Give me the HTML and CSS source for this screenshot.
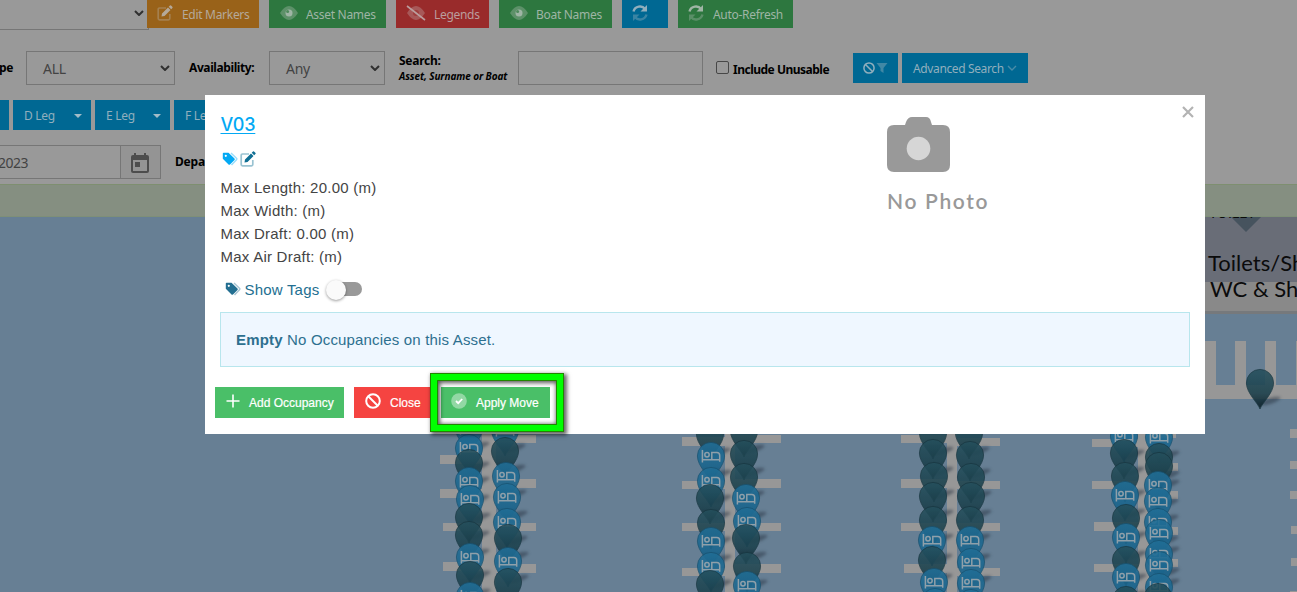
FILE: index.html
```html
<!DOCTYPE html>
<html lang="en">
<head>
<meta charset="utf-8">
<title>Marina Map</title>
<link rel="stylesheet" href="styles.css">
</head>
<body>
<svg class="defs" width="0" height="0" aria-hidden="true">
  <defs>
    <linearGradient id="darkFill" x1="0" y1="0" x2="0" y2="1"><stop offset="0" stop-color="#25505d"/><stop offset=".6" stop-color="#1b404c"/><stop offset="1" stop-color="#0b1c24"/></linearGradient>
    <linearGradient id="blueFill" x1="0" y1="0" x2="0" y2="1"><stop offset="0" stop-color="#216e96"/><stop offset=".6" stop-color="#1b658d"/><stop offset="1" stop-color="#0e3d58"/></linearGradient>
    <filter id="soft" x="-50%" y="-50%" width="200%" height="200%"><feGaussianBlur stdDeviation="1.5"/></filter>
    <g id="shade"><ellipse cx="10" cy="18" rx="11" ry="3" transform="rotate(-18 10 18)" fill="#27333f" opacity=".5" filter="url(#soft)"/></g>
    <path id="drop" d="M0 26C-2 20-13.6 10-13.6 0A13.6 13.6 0 0 1 13.6 0C13.6 10 2 20 0 26Z"/>
    <g id="d"><use href="#shade"/><use href="#drop" fill="url(#darkFill)" stroke="#17353f" stroke-width=".8" opacity=".88"/></g>
    <g id="b"><use href="#shade"/><use href="#drop" fill="url(#blueFill)" stroke="#17516f" stroke-width=".8" opacity=".9"/><path d="M-8.600-6V6.500M-8.600 3.700H8.700M8.700 5.800V-.6Q8.700-3.500 5.800-3.500H.8V3.700" fill="none" stroke="#8fa0aa" stroke-width="1.500"/><circle cx="-4" cy="-1.200" r="2.200" fill="none" stroke="#8fa0aa" stroke-width="1.500"/></g>
    <symbol id="eye" viewBox="0 0 18 14"><path d="M0 7Q9-7 18 7Q9 21 0 7Z" fill="currentColor" opacity=".42"/><circle cx="9" cy="7" r="3.500" fill="currentColor"/><circle cx="7.600" cy="5.600" r="1.500" fill="#4f8a5c"/></symbol>
    <symbol id="sync" viewBox="0 0 16 16"><path d="M1.500 6.500C3 1 10 0 13 4" fill="none" stroke="currentColor" stroke-width="2.400"/><path d="M15 0V6.500H8.500Z" fill="currentColor"/><g opacity=".4"><path d="M14.500 9.500C13 15 6 16 3 12" fill="none" stroke="currentColor" stroke-width="2.400"/><path d="M1 16V9.500H7.500Z" fill="currentColor"/></g></symbol>
    <symbol id="edit" viewBox="0 0 16 16"><path d="M9 3H2.500Q1.200 3 1.200 4.300V13.500Q1.200 14.800 2.500 14.800H11.500Q12.800 14.800 12.800 13.500V9" fill="none" stroke="currentColor" stroke-width="1.700" opacity=".42"/><path d="M4.500 11.500L5 8.500L11 2.500L13.500 5L7.500 11ZM11.700 1.800L13 .6Q13.600 0 14.300.7L15.300 1.700Q16 2.400 15.400 3L14.200 4.300Z" fill="currentColor"/></symbol>
    <symbol id="tags" viewBox="0 0 16 14"><path d="M9 1L14.500 6.300Q15.200 7 14.500 7.700L9.500 13" fill="none" stroke="currentColor" stroke-width="1.400" opacity=".4"/><path d="M.8 1.500Q.8.800 1.500.8H6.500L12.500 6.600Q13.200 7.300 12.500 8L8 12.500Q7.200 13.200 6.500 12.500L.8 6.800ZM3.800 2.700A1.100 1.100 0 1 0 3.800 4.900A1.100 1.100 0 1 0 3.800 2.700Z" fill="currentColor" fill-rule="evenodd"/></symbol>
    <symbol id="ban" viewBox="0 0 16 16"><path d="M3 3L13 13" stroke="currentColor" stroke-width="2"/><circle cx="8" cy="8" r="6.800" fill="none" stroke="currentColor" stroke-width="2"/></symbol>
    <symbol id="chev" viewBox="0 0 10 6"><path d="M1 1L5 5L9 1" fill="none" stroke="currentColor" stroke-width="2"/></symbol>
  </defs>
</svg>

<div class="page">
  <header class="tools">
    <div class="row actions">
      <div class="select top"><svg class="arrow"><use href="#chev"/></svg></div>
      <div class="btn orange w112"><svg class="i16"><use href="#edit"/></svg><span>Edit Markers</span></div>
      <div class="btn green w117"><svg class="eye"><use href="#eye"/></svg><span>Asset Names</span></div>
      <div class="btn red w93"><svg class="slash" viewBox="0 0 20 16"><path d="M1 8Q10-6 19 8Q10 22 1 8Z" fill="currentColor" opacity=".4"/><circle cx="10" cy="8" r="3" fill="#992b2b" opacity=".6"/><path d="M1 1L19 15" stroke="currentColor" stroke-width="1.600"/></svg><span>Legends</span></div>
      <div class="btn green w113"><svg class="eye"><use href="#eye"/></svg><span>Boat Names</span></div>
      <div class="btn blue w46"><svg class="i16"><use href="#sync"/></svg></div>
      <div class="btn green w115"><svg class="i16"><use href="#sync"/></svg><span>Auto-Refresh</span></div>
    </div>
    <div class="row filters">
      <b class="type">pe</b>
      <div class="select all"><span>ALL</span><svg class="arrow"><use href="#chev"/></svg></div>
      <b class="avail">Availability:</b>
      <div class="select any"><span>Any</span><svg class="arrow"><use href="#chev"/></svg></div>
      <div class="search"><b>Search:</b><i>Asset, Surname or Boat</i></div>
      <div class="field"></div>
      <div class="check"></div>
      <b class="unusable">Include Unusable</b>
      <div class="btn blue clear"><svg class="i12"><use href="#ban"/></svg><svg class="i12" viewBox="0 0 12 12"><path d="M.5 1H11.500L7.500 6V11L4.500 9V6Z" fill="currentColor" opacity=".45"/></svg></div>
      <div class="btn blue adv"><span>Advanced Search</span><svg class="small" viewBox="0 0 10 6"><path d="M1 1L5 5L9 1" fill="none" stroke="currentColor" stroke-width="1.400" opacity=".5"/></svg></div>
    </div>
    <div class="row legs">
      <div class="btn blue stub"></div>
      <div class="btn blue leg w78"><span>D Leg</span><em class="caret"></em></div>
      <div class="btn blue leg w75"><span>E Leg</span><em class="caret"></em></div>
      <div class="btn blue leg w78"><span>F Leg</span></div>
    </div>
    <div class="row dates">
      <div class="date"><span>2023</span></div>
      <div class="cal"><svg viewBox="0 0 18 20"><path d="M3 0H5V2H13V0H15V2H16Q18 2 18 4V18Q18 20 16 20H2Q0 20 0 18V4Q0 2 2 2H3ZM2 7V18H16V7ZM4 9H9V14H4Z" fill="#4d4d4d" fill-rule="evenodd"/></svg></div>
      <b class="depart">Departure:</b>
    </div>
  </header>
  <div class="notice"></div>
  <svg class="map" viewBox="0 217 1297 375" width="1297" height="375">
    <rect y="217" width="1297" height="375" fill="#677f94"/>
    <rect x="1200" y="217" width="97" height="65" fill="#696d77"/>
    <rect x="1200" y="282" width="97" height="29" fill="#898989"/>
    <rect x="1200" y="311" width="97" height="3" fill="#76797c"/>
    <path d="M1231 217H1261L1246 232Z" fill="#46535e"/>
    <text class="place tiny" x="1209" y="218">TOILET</text>
    <text class="place" x="1208" y="270.500">Toilets/Sh</text>
    <text class="place" x="1210" y="297">WC &amp; Sh</text>
    <path fill="#979797" d="M1200 341h16v44h-16zM1235 341h11v44h-11zM1265 341h11v44h-11zM1296 341h1v44h-1zM1200 385h97v14h-97z
    M482 430h14v162h-14zM440 455h42v9h-42zM440 489h42v9h-42zM443 523h39v8h-39zM443 562h39v9h-39zM496 435h40v8h-40zM496 479h40v9h-40zM496 523h40v8h-40zM496 564h40v9h-40z
    M725 430h10v162h-10zM682 437h43v9h-43zM682 481h43v8h-43zM682 523h43v8h-43zM682 568h43v8h-43zM735 435h46v8h-46zM735 479h46v9h-46zM735 523h46v8h-46zM735 564h46v9h-46z
    M947 430h10v162h-10zM901 435h46v8h-46zM901 479h46v9h-46zM901 523h46v8h-46zM904 564h43v9h-43zM957 438h43v8h-43zM957 481h43v8h-43zM957 523h43v8h-43zM957 568h43v8h-43z
    M1138 430h11v162h-11zM1092 439h46v8h-46zM1092 481h46v8h-46zM1094 522h44v9h-44zM1094 564h44v8h-44zM1149 430h27v8h-27zM1149 463h29v8h-29zM1149 491h29v8h-29zM1149 527h29v8h-29zM1149 559h29v8h-29z
    M1290 429h7v9h-7zM1290 461h7v8h-7zM1290 491h7v8h-7zM1291 526h6v8h-6zM1291 558h6v8h-6zM1290 591h7v1h-7z"/>
    <use href="#d" x="1260" y="383"/>
    <g>
      <use href="#b" x="469" y="428"/><use href="#b" x="469" y="448"/><use href="#d" x="469" y="463"/><use href="#b" x="469" y="481"/><use href="#b" x="470" y="499"/><use href="#d" x="469" y="517"/><use href="#d" x="469" y="535"/><use href="#b" x="470" y="557"/><use href="#d" x="470" y="575"/><use href="#b" x="470" y="596"/>
      <use href="#b" x="505" y="430"/><use href="#d" x="505" y="451"/><use href="#b" x="506" y="476"/><use href="#b" x="507" y="497"/><use href="#b" x="507" y="522"/><use href="#d" x="508" y="538"/><use href="#b" x="508" y="561"/><use href="#d" x="508" y="582"/>
    </g>
    <g>
      <use href="#d" x="710" y="434"/><use href="#b" x="711" y="456"/><use href="#b" x="711" y="481"/><use href="#d" x="710" y="498"/><use href="#d" x="711" y="523"/><use href="#b" x="711" y="541"/><use href="#b" x="711" y="566"/><use href="#d" x="710" y="584"/>
      <use href="#d" x="744" y="431"/><use href="#d" x="744" y="454"/><use href="#d" x="744" y="477"/><use href="#b" x="746" y="498"/><use href="#b" x="747" y="521"/><use href="#d" x="746" y="538"/><use href="#d" x="747" y="566"/><use href="#b" x="747" y="585"/>
    </g>
    <g>
      <use href="#d" x="933" y="433"/><use href="#d" x="933" y="453"/><use href="#d" x="934" y="476"/><use href="#d" x="933" y="496"/><use href="#d" x="933" y="520"/><use href="#b" x="932" y="540"/><use href="#d" x="932" y="560"/><use href="#b" x="934" y="582"/><use href="#b" x="935" y="602"/>
      <use href="#d" x="969" y="433"/><use href="#d" x="970" y="455"/><use href="#d" x="971" y="477"/><use href="#d" x="971" y="496"/><use href="#d" x="970" y="520"/><use href="#b" x="970" y="540"/><use href="#b" x="971" y="562"/><use href="#b" x="971" y="583"/><use href="#b" x="971" y="603"/>
    </g>
    <g>
      <use href="#b" x="1124" y="436"/><use href="#d" x="1124" y="453"/><use href="#d" x="1125" y="476"/><use href="#b" x="1125" y="495"/><use href="#d" x="1126" y="518"/><use href="#b" x="1126" y="537"/><use href="#d" x="1126" y="560"/><use href="#b" x="1126" y="577"/><use href="#d" x="1126" y="600"/>
      <use href="#b" x="1159" y="437"/><use href="#d" x="1159" y="457"/><use href="#d" x="1159" y="466"/><use href="#b" x="1158" y="485"/><use href="#b" x="1158" y="501"/><use href="#b" x="1158" y="522"/><use href="#b" x="1159" y="533"/><use href="#b" x="1159" y="554"/><use href="#b" x="1159" y="565"/><use href="#b" x="1159" y="587"/><use href="#d" x="1158" y="597"/>
    </g>
  </svg>

  <section class="modal">
    <div class="upper">
      <div class="details">
        <a class="name">V03</a>
        <div class="icons"><svg class="tag cyan"><use href="#tags"/></svg><svg class="i16 teal"><use href="#edit"/></svg></div>
        <p>Max Length: 20.00 (m)</p>
        <p>Max Width: (m)</p>
        <p>Max Draft: 0.00 (m)</p>
        <p>Max Air Draft: (m)</p>
        <div class="show"><svg class="tag"><use href="#tags"/></svg><span>Show Tags</span><div class="switch"><em></em></div></div>
      </div>
      <div class="photo">
        <svg viewBox="0 0 63 55" width="63" height="55"><path d="M7 8H18L19 5Q21 0 25 0H39Q43 0 44 5L45 8H56Q63 8 63 15V48Q63 55 56 55H7Q0 55 0 48V15Q0 8 7 8Z" fill="#999"/><circle cx="31.500" cy="31.500" r="11.800" fill="#d6d6d6"/></svg>
        <span>No Photo</span>
      </div>
      <svg class="close" viewBox="0 0 12 12"><path d="M1 1L11 11M11 1L1 11" stroke="#b3b3b3" stroke-width="2.200"/></svg>
    </div>
    <div class="alert"><b>Empty</b> No Occupancies on this Asset.</div>
    <div class="buttons">
      <div class="mbtn g add"><svg class="i15" viewBox="0 0 14 14"><path d="M7 .5V13.500M.5 7H13.500" stroke="currentColor" stroke-width="1.600"/></svg><span>Add Occupancy</span></div>
      <div class="mbtn r cls"><svg class="i16"><use href="#ban"/></svg><span>Close</span></div>
      <div class="mbtn g apply"><svg class="i16" viewBox="0 0 16 16"><circle cx="8" cy="8" r="7.800" fill="#fff" opacity=".4"/><path d="M5 8L7.200 10.200L11.200 6" fill="none" stroke="#fff" stroke-width="1.800"/></svg><span>Apply Move</span></div>
    </div>
  </section>
  <div class="highlight"></div>
</div>
</body>
</html>
```
FILE: styles.css
```css
* { box-sizing: border-box; }
body { margin: 0; background: #999; font-family: "Noto Sans", sans-serif; font-size: 12px; color: #000; overflow: hidden; }
svg { display: block; flex: none; }
.defs { position: absolute; }
.page { position: relative; width: 1297px; height: 592px; overflow: hidden; }
.tools { height: 184px; }
.row { display: flex; white-space: nowrap; }
.row > * { flex: none; }
.actions { height: 51px; gap: 10px; }
.btn { height: 28px; display: flex; align-items: center; color: #a3b3b0; padding-left: 11px; font-size: 12px; letter-spacing: -.3px; }
.orange { background: #996219; color: #b5a999; margin-left: -12px; }
.green { background: #2d773f; color: #9fb5a5; }
.red { background: #992b2b; color: #bb9d9d; }
.blue { background: #006893; color: #91afbd; }
.w112 { width: 112px; }
.w117 { width: 117px; }
.w93 { width: 93px; }
.w113 { width: 113px; }
.w46 { width: 46px; }
.w115 { width: 115px; }
.w78 { width: 78px; }
.w75 { width: 75px; }
.i16 { width: 16px; height: 16px; }
.actions svg { margin-top: -3px; margin-right: 8px; }
.actions .btn .i16 { margin-left: -1px; margin-right: 9px; }
.actions .arrow { margin: 0; }
.actions .eye { width: 18px; height: 14px; margin-right: 8px; }
.actions .slash { width: 20px; height: 16px; margin-left: -1px; }
.select { border: 1px solid #767676; display: flex; align-items: center; justify-content: space-between; height: 34px; color: #434343; font-size: 14px; padding: 0 4px 0 16px; letter-spacing: -.3px; }
.arrow { width: 10px; height: 6px; color: #303030; }
.actions .top { width: 149px; height: 30px; border-top: 0; border-left: 0; padding-bottom: 3px; justify-content: flex-end; }
.filters { height: 49px; }
.filters b { font-size: 12px; letter-spacing: -.25px; line-height: 34px; }
.filters .type { width: 26px; text-indent: -1px; }
.all { width: 149px; }
.filters .avail { width: 94px; padding-left: 14px; letter-spacing: -.4px; }
.any { width: 116px; }
.search { width: 133px; padding: 1px 0 0 14px; display: flex; flex-direction: column; }
.filters .search b { line-height: 18px; }
.search i { font-size: 10px; font-weight: 700; line-height: 13px; letter-spacing: -.1px; }
.field { width: 185px; height: 34px; border: 1px solid #767676; }
.check { width: 13px; height: 13px; border: 1px solid #474747; border-radius: 2px; margin: 10px 4px 0 13px; }
.filters .unusable { width: 120px; line-height: 37px; letter-spacing: -.5px; }
.clear { width: 45px; height: 30px; margin: 2px 4px 0 0; padding-left: 10px; gap: 1px; }
.i12 { width: 12px; height: 12px; }
.adv { width: 126px; height: 30px; margin-top: 2px; gap: 1px; letter-spacing: -.37px; }
.adv span { width: 93px; }
.small { width: 10px; height: 6px; }
.legs { height: 45px; gap: 4px; }
.legs .btn { height: 30px; padding-top: 1px; }
.legs .stub { width: 9px; padding: 0; }
.leg { justify-content: space-between; padding-right: 9px; }
.caret { border: 4px solid transparent; border-top-color: #a2bcc8; border-bottom: 0; }
.dates { height: 39px; }
.date { width: 121px; height: 34px; border: 1px solid #767676; border-left: 0; color: #434343; font-size: 14px; line-height: 34px; letter-spacing: -.5px; }
.date span { margin-left: -2px; }
.cal { width: 40px; height: 34px; border: 1px solid #767676; border-left: 0; display: flex; justify-content: center; padding: 7px 1px 0 0; background: #949494; }
.cal svg { width: 18px; height: 20px; }
.depart { padding-left: 14px; line-height: 33px; letter-spacing: -.2px; }
.notice { height: 33px; background: #858f81; border-top: 1px solid #7e8f70; border-bottom: 1px solid #7e8f78; }
.place { font: 22px Lato, sans-serif; fill: #0b0b0b; }
.tiny { font-size: 14px; }
.modal { position: absolute; left: 205px; top: 95px; width: 1000px; height: 339px; background: #fff; font-family: "Liberation Sans", Arial, sans-serif; color: #444; }
.upper { display: flex; height: 217px; }
.details { width: 682px; padding: 19px 0 0 15.5px; }
.name { display: inline-block; color: #03a9f4; font: 500 18px/22px Inter, sans-serif; text-decoration: underline; text-underline-offset: 2px; letter-spacing: -.2px; }
.icons { display: flex; gap: 2px; height: 26px; margin: 15px 0 5px 1px; }
.tag { width: 16px; height: 14px; }
.cyan { color: #03a9f4; margin-top: 1px; }
.teal { color: #0f6f94; }
.details p { margin: 0; font-size: 15px; line-height: 23px; height: 23px; letter-spacing: .24px; }
.details .icons + p { margin-top: -6px; }
.show { display: flex; align-items: center; height: 24px; margin: 9px 0 0 4px; color: #236f91; font-size: 15px; gap: 4px; letter-spacing: .2px; }
.switch { width: 34px; height: 14px; border-radius: 7px; background: #999; margin-left: 5px; display: flex; align-items: center; }
.switch em { width: 20px; height: 20px; border-radius: 50%; background: #fafafa; margin-left: -2px; margin-top: 1px; flex: none; box-shadow: 0 1px 3px rgba(0,0,0,.4); }
.photo { width: 292px; padding-top: 22px; }
.photo span { display: block; font: 600 21px/26px Lato, sans-serif; color: #999; margin-top: 16px; letter-spacing: 1.65px; }
.close { width: 12px; height: 12px; margin-top: 11px; margin-left: 3px; }
.alert { margin: 0 15px; height: 55px; border: 1px solid #b8e6ed; background: #eff7ff; color: #2d708f; font-size: 15px; line-height: 53px; padding-left: 15px; letter-spacing: .17px; }
.buttons { display: flex; gap: 10px; margin: 20px 0 0 10px; }
.mbtn { height: 31px; display: flex; align-items: center; color: #fff; font-size: 12px; padding-left: 11px; white-space: nowrap; }
.mbtn svg { margin-top: -3px; }
.mbtn span { margin-left: 9px; -webkit-text-stroke: .2px #fff; }
.g { background: #4abf68; }
.r { background: #f54441; }
.i15 { width: 14px; height: 14px; }
.add { width: 129px; }
.cls { width: 77px; }
.apply { width: 109px; padding-left: 10px; }
.highlight { position: absolute; left: 430px; top: 373px; width: 134px; height: 59px; border: 7px solid #0f0; outline: 1px solid #218600; outline-offset: -1px; box-shadow: 2px 2px 4px 1px rgba(0,0,0,.6), inset 0 0 0 1px #218600, inset 1px 1px 4px 2px rgba(0,0,0,.65); }
```
